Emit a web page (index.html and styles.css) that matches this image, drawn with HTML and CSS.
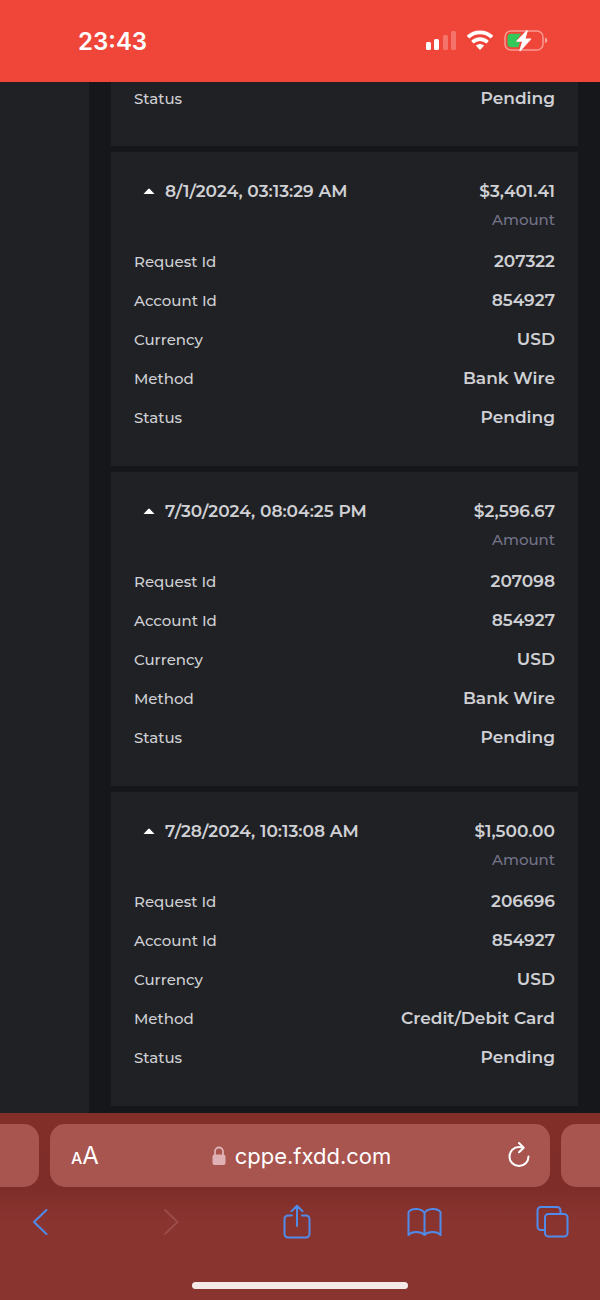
FILE: index.html
```html
<!DOCTYPE html>
<html lang="en">
<head>
    <meta charset="UTF-8">
    <meta name="viewport" content="width=device-width, initial-scale=1.0">
    <title>Transactions</title>
    <link rel="stylesheet" href="styles.css">
</head>
<body>
    <header class="status-bar">
        <time class="clock">23:43</time>
        <div class="indicators">
            <!-- signal -->
            <svg width="31" height="20" viewBox="0 0 31 20" fill="#fff">
                <rect x="1" y="11" width="5" height="8" rx="1.5"/>
                <rect x="9" y="8" width="5" height="11" rx="1.5"/>
                <rect x="18" y="4" width="5" height="15" rx="1.5" opacity=".25"/>
                <rect x="26" y="0" width="5" height="19" rx="1.5" opacity=".25"/>
            </svg>
            <!-- wifi -->
            <svg width="28" height="20" viewBox="0 0 28 20">
                <path d="M2 6.200a17.500 17.500 0 0 1 24 0" fill="none" stroke="#fff" stroke-width="3.800"/>
                <path d="M6.400 11.200a11 11 0 0 1 15.200 0" fill="none" stroke="#fff" stroke-width="3.600"/>
                <path d="M9.800 14.600a6.400 6.400 0 0 1 8.400 0L14 19z" fill="#fff"/>
            </svg>
            <!-- battery -->
            <svg width="44" height="24" viewBox="0 0 44 24">
                <rect x="1" y="2" width="38" height="19" rx="6" fill="none" stroke="#fff" stroke-opacity=".45" stroke-width="1.500"/>
                <path d="M41 8.500c3 .8 3 4.800 0 5.600z" fill="#fff" opacity=".5"/>
                <path d="M7 4.800h10l-5 8h4l-1.500 5.400H7A3.500 3.500 0 0 1 3.500 14.700V8.300A3.500 3.500 0 0 1 7 4.800z" fill="#34c759"/>
                <path d="M22.500 1.500 12.500 11.700c-.4.500-.1 1 .5 1h5l-2.600 8.600c-.3.900.5 1.200 1.100.6L27 10.600c.4-.5.100-1-.5-1h-4.900L23.700 2.200c.3-.9-.6-1.300-1.200-.7z" fill="#fff"/>
            </svg>
        </div>
    </header>

    <div class="layout">
        <aside class="sidebar"></aside>
        <main class="cards">
            <article class="card card-cut">
                <dl class="details">
                    <div class="row"><dt>Status</dt><dd>Pending</dd></div>
                </dl>
            </article>

            <article class="card">
                <div class="card-head">
                    <button class="toggle" aria-expanded="true"><svg width="12" height="6" viewBox="0 0 12 6"><path d="M.5 6 5.200 1q.8-.8 1.600 0l4.700 5z" fill="#fff"/></svg>8/1/2024, 03:13:29 AM</button>
                    <div class="amount"><strong>$3,401.41</strong><span>Amount</span></div>
                </div>
                <dl class="details">
                    <div class="row"><dt>Request Id</dt><dd>207322</dd></div>
                    <div class="row"><dt>Account Id</dt><dd>854927</dd></div>
                    <div class="row"><dt>Currency</dt><dd>USD</dd></div>
                    <div class="row"><dt>Method</dt><dd>Bank Wire</dd></div>
                    <div class="row"><dt>Status</dt><dd>Pending</dd></div>
                </dl>
            </article>

            <article class="card">
                <div class="card-head">
                    <button class="toggle" aria-expanded="true"><svg width="12" height="6" viewBox="0 0 12 6"><path d="M.5 6 5.200 1q.8-.8 1.600 0l4.700 5z" fill="#fff"/></svg>7/30/2024, 08:04:25 PM</button>
                    <div class="amount"><strong>$2,596.67</strong><span>Amount</span></div>
                </div>
                <dl class="details">
                    <div class="row"><dt>Request Id</dt><dd>207098</dd></div>
                    <div class="row"><dt>Account Id</dt><dd>854927</dd></div>
                    <div class="row"><dt>Currency</dt><dd>USD</dd></div>
                    <div class="row"><dt>Method</dt><dd>Bank Wire</dd></div>
                    <div class="row"><dt>Status</dt><dd>Pending</dd></div>
                </dl>
            </article>

            <article class="card">
                <div class="card-head">
                    <button class="toggle" aria-expanded="true"><svg width="12" height="6" viewBox="0 0 12 6"><path d="M.5 6 5.200 1q.8-.8 1.600 0l4.700 5z" fill="#fff"/></svg>7/28/2024, 10:13:08 AM</button>
                    <div class="amount"><strong>$1,500.00</strong><span>Amount</span></div>
                </div>
                <dl class="details">
                    <div class="row"><dt>Request Id</dt><dd>206696</dd></div>
                    <div class="row"><dt>Account Id</dt><dd>854927</dd></div>
                    <div class="row"><dt>Currency</dt><dd>USD</dd></div>
                    <div class="row"><dt>Method</dt><dd>Credit/Debit Card</dd></div>
                    <div class="row"><dt>Status</dt><dd>Pending</dd></div>
                </dl>
            </article>
        </main>
    </div>

    <footer class="browser">
        <div class="tabs">
            <div class="tab tab-prev"></div>
            <div class="tab tab-current">
                <button class="text-size" aria-label="Text size"><small>A</small>A</button>
                <button class="address">
                    <svg width="14" height="20" viewBox="0 0 14 20">
                        <path d="M3 9V5.500a4 4 0 0 1 8 0V9" fill="none" stroke="#dfb0b4" stroke-width="1.800"/>
                        <rect x=".5" y="8.500" width="13" height="10.500" rx="2" fill="#dfb0b4"/>
                    </svg>
                    cppe.fxdd.com
                </button>
                <button class="reload" aria-label="Reload">
                    <svg width="24" height="28" viewBox="0 0 24 28" fill="none" stroke="#fff" stroke-width="2" stroke-linecap="round" stroke-linejoin="round">
                        <path d="M20.500 14.500A9.500 9.500 0 1 1 11 5q2 0 4 .7"/>
                        <path d="M11 1l4.700 4.700-4.700 4.600"/>
                    </svg>
                </button>
            </div>
            <div class="tab tab-next"></div>
        </div>

        <nav class="toolbar">
            <button aria-label="Back"><svg width="34" height="36" viewBox="0 0 34 36"><path d="M23.500 6 11 18l12.500 12"/></svg></button>
            <button aria-label="Forward" disabled><svg width="34" height="36" viewBox="0 0 34 36"><path d="M14 6 26.500 18 14 30"/></svg></button>
            <button aria-label="Share"><svg width="34" height="36" viewBox="0 0 34 36"><path d="M13 11.500H9A3.500 3.500 0 0 0 5.500 15v15A3.500 3.500 0 0 0 9 33.500h18a3.500 3.500 0 0 0 3.500-3.500V15a3.500 3.500 0 0 0-3.500-3.500h-4M18 22V2M12.500 7.300 18 1.800l5.500 5.500"/></svg></button>
            <button aria-label="Bookmarks"><svg width="34" height="36" viewBox="0 0 34 36"><path d="M17.500 9C14.500 4 5 3.500 1.500 8v23c3.500-4 12-4 16 0 4-4 12.500-4 16 0V8C30 3.500 20.500 4 17.500 9zv22"/></svg></button>
            <button aria-label="Tabs"><svg width="34" height="36" viewBox="0 0 34 36"><path d="M9 26H6a3.500 3.500 0 0 1-3.500-3.500V6.500A3.500 3.500 0 0 1 6 3h16a3.500 3.500 0 0 1 3.500 3.500V9"/><rect x="10" y="10" width="22.500" height="22.500" rx="3.500"/></svg></button>
        </nav>
        <div class="home-bar"></div>
    </footer>
</body>
</html>
```
FILE: styles.css
```css
* {
    box-sizing: border-box;
}

body {
    margin: 0;
    min-height: 100vh;
    display: flex;
    flex-direction: column;
    background: #16171b;
    color: #cfd0d4;
    font-family: Montserrat, Inter, sans-serif;
    font-size: 17px;
    font-weight: 600;
}

button {
    padding: 0;
    border: none;
    background: none;
    color: inherit;
    font: inherit;
}

svg {
    display: block;
    flex: none;
    overflow: visible;
}

/* phone status bar */
.status-bar {
    display: flex;
    justify-content: space-between;
    align-items: center;
    height: 82px;
    padding: 0 52px 0 78px;
    background: #f0463a;
    color: #fff;
}

.clock {
    font-family: Inter, sans-serif;
    font-size: 24px;
}

.indicators {
    display: flex;
    align-items: center;
    gap: 10px;
}

/* page */
.layout {
    flex: 1;
    display: grid;
    grid-template-columns: 89px 1fr;
}

.sidebar {
    background: #202125;
}

.cards {
    display: flex;
    flex-direction: column;
    gap: 6px;
    padding: 0 22px 7px;
    overflow: hidden;
}

.card {
    padding: 25px 23px 29px;
    background: #202125;
}

/* first card is scrolled under the status bar */
.card-cut {
    margin-top: -3px;
    padding-top: 0;
    padding-bottom: 28px;
}

.card-head {
    display: flex;
    justify-content: space-between;
    align-items: flex-start;
    margin-bottom: 8px;
    line-height: 28px;
}

.toggle {
    display: flex;
    align-items: center;
    gap: 10px;
    padding-left: 9px;
    line-height: 28px;
}

.amount {
    display: flex;
    flex-direction: column;
    align-items: flex-end;
    gap: 1px;
}

.amount strong {
    font-weight: 600;
}

.amount span {
    color: #737488;
    font-size: 15px;
    font-weight: 500;
}

.details {
    margin: 0;
}

.row {
    display: flex;
    justify-content: space-between;
    line-height: 39px;
}

.row dt {
    font-size: 15px;
    font-weight: 500;
}

.row dd {
    margin: 0;
}

/* browser controls */
.browser {
    padding-top: 11px;
    background: linear-gradient(#822e29, #7e2d28 74px, #8a3430 110px);
    color: #fff;
    font-family: Inter, sans-serif;
    font-weight: 400;
}

.tabs {
    display: grid;
    grid-template-columns: 39px 1fr 39px;
    gap: 11px;
}

.tab {
    height: 63px;
    background: #a8544f;
}

.tab-prev {
    border-radius: 0 15px 15px 0;
}

.tab-next {
    border-radius: 15px 0 0 15px;
}

.tab-current {
    display: grid;
    grid-template-columns: 32px 1fr 32px;
    align-items: center;
    padding: 0 18px 0 21px;
    border-radius: 15px;
}

.text-size {
    font-size: 24px;
    text-align: left;
    white-space: nowrap;
}

.text-size small {
    font-size: 16px;
    font-weight: 500;
}

.address {
    display: flex;
    justify-content: center;
    align-items: center;
    gap: 9px;
    font-size: 22px;
}

.reload {
    justify-self: end;
}

.toolbar {
    display: flex;
    justify-content: space-between;
    padding: 17px 31px 0 23px;
}

.toolbar svg {
    fill: none;
    stroke: #508bea;
    stroke-width: 2;
    stroke-linecap: round;
    stroke-linejoin: round;
}

.toolbar button:disabled svg {
    stroke: #9a4c48;
}

.home-bar {
    width: 36%;
    height: 7px;
    margin: 42px auto 11px;
    border-radius: 4px;
    background: #f3e9e9;
}
```
